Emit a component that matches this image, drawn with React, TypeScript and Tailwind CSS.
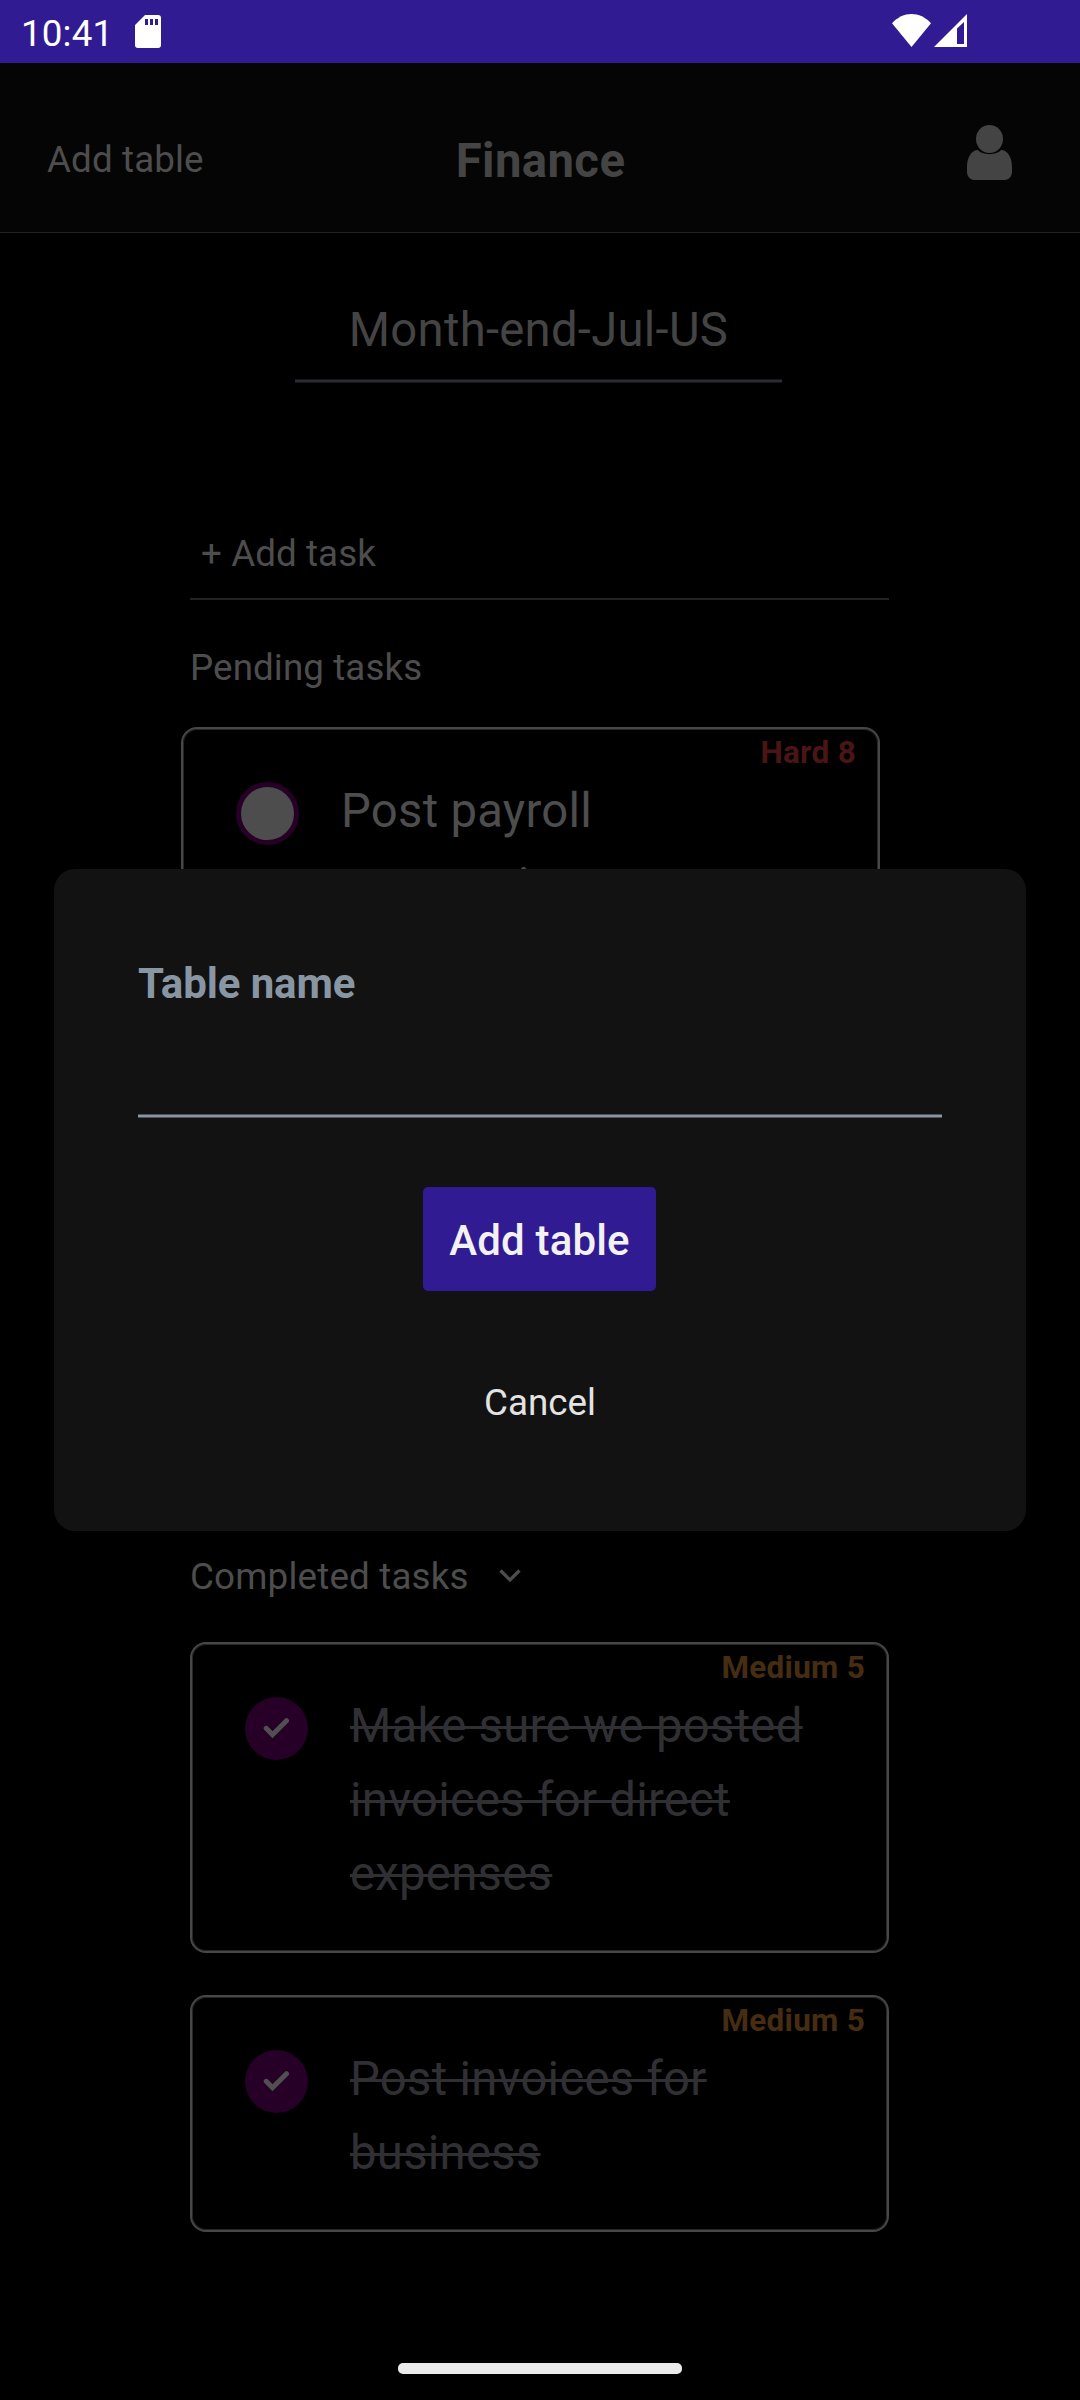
import type { ReactNode } from "react";

function StatusBar() {
  return (
    <div className="flex h-[63px] items-start bg-[#311b92] pl-[21px] text-white">
      <span className="mt-[12px] w-[92px] text-[36.75px] leading-[44px] tracking-[0.15px]">10:41</span>
      <svg className="mt-[15px] ml-[22px] h-[33px] w-[26px]" viewBox="0 0 26 33">
        <path
          fill="currentColor"
          fillRule="evenodd"
          d="M10 0H23Q26 0 26 3V30Q26 33 23 33H3Q0 33 0 30V10ZM10 4V10H13V4ZM15 4V10H18V4ZM20 4V10H23V4Z"
        />
      </svg>
      <div className="mt-[14px] mr-[113px] ml-auto flex gap-[3px]">
        <svg className="h-[33px] w-[39px]" viewBox="0 0 39 33">
          <path fill="currentColor" d="M0 9.3C11 -3.1 28 -3.1 39 9.3L19.5 33Z" />
        </svg>
        <svg className="h-[33px] w-[33px]" viewBox="0 0 33 33">
          <path fill="currentColor" fillRule="evenodd" d="M33 0V33H0ZM30 8L23 14.5V30H30Z" />
        </svg>
      </div>
    </div>
  );
}

function Header() {
  return (
    <header className="grid h-[170px] grid-cols-3 items-start border-b border-[#222222] bg-[#050505] pr-[68px] pl-[47px]">
      <span className="mt-[75px] text-[36.75px] leading-[44px] tracking-[0.12px] text-[#4d4d4d]">
        Add table
      </span>
      <h1 className="mt-[70px] pl-[22px] text-center text-[47.25px] leading-[56px] font-bold tracking-[0.4px] text-[#444444]">
        Finance
      </h1>
      <svg className="mt-[62px] h-[55px] w-[45px] justify-self-end" viewBox="0 0 45 55">
        <ellipse cx="22.5" cy="14" rx="13.5" ry="14" fill="#444444" />
        <path
          fill="#444444"
          d="M11 25C15 30.500 30 30.500 34 25C41 25 45 33 45 42V47C45 51 42 55 38 55H7C3 55 0 51 0 47V42C0 33 4 25 11 25Z"
        />
      </svg>
    </header>
  );
}

function Card({
  badge,
  badgeClass,
  done,
  children,
}: {
  badge: string;
  badgeClass: string;
  done?: boolean;
  children: ReactNode;
}) {
  return (
    <article className="relative flex w-[699px] items-start rounded-[16px] border-2 border-[#474747] pt-[45px] pb-[40px] pl-[53px] shadow-[inset_0_0_0_1px_#262626]">
      <span
        className={`absolute top-[6px] right-[22px] text-[31.5px] leading-[36px] font-bold tracking-[0.25px] ${badgeClass}`}
      >
        {badge}
      </span>
      {done ? (
        <span className="mt-[8px] flex size-[63px] shrink-0 items-center justify-center rounded-full bg-[#260026]">
          <svg className="h-[22px] w-[28px]" viewBox="0 0 28 22" fill="none" stroke="#505050" strokeWidth="5">
            <path d="M3.200 10.300L9.500 16.800L23.500 2.700" strokeLinecap="round" />
          </svg>
        </span>
      ) : (
        <span className="mt-[8px] size-[63px] shrink-0 rounded-full border-5 border-[#260026] bg-[#4d4d4d]" />
      )}
      <p
        className={
          done
            ? "ml-[42px] text-[47.25px] leading-[74px] tracking-[0.28px] text-[#303034] line-through decoration-[3px]"
            : "ml-[42px] text-[47.25px] leading-[74px] tracking-[0.28px] text-[#4d4d4d]"
        }
      >
        {children}
      </p>
    </article>
  );
}

function Dialog() {
  return (
    <div className="absolute inset-0 flex items-center justify-center">
      <section className="flex h-[662px] w-[972px] flex-col items-center rounded-[21px] bg-[#121212] px-[84px]">
        <label className="mt-[90px] self-stretch text-[42px] leading-[50px] font-bold tracking-[-0.1px] text-[#8896a3]">
          Table name
        </label>
        <div className="mt-[105px] h-[4px] w-[804px] border-y border-[#4b5259] bg-[#8896a3]" />
        <button className="mt-[69px] mr-px h-[104px] w-[233px] rounded-[5px] bg-[#311b92] pt-[3px] text-[42px] leading-[50px] font-medium tracking-[0.15px] text-[#f2f2f2]">
          Add table
        </button>
        <button className="mt-[90px] text-[36.75px] leading-[44px] text-[#e3e3e3]">Cancel</button>
      </section>
    </div>
  );
}

export default function App() {
  return (
    <div className="relative flex h-[2400px] w-[1080px] flex-col overflow-hidden bg-black font-['Roboto',sans-serif]">
      <StatusBar />
      <Header />
      <main className="flex flex-col pt-[69px]">
        <div className="ml-[295px] w-[487px] text-center text-[47.25px] leading-[56px] tracking-[0.27px] text-[#444444]">
          Month-end-Jul-US
          <div className="mt-[21px] h-[4px] border-y border-[#15181a] bg-[#272d31]" />
        </div>
        <div className="mt-[149px] ml-[190px] flex w-[699px] flex-col">
          <div className="h-[68px] border-b-2 border-[#222222] pl-[11px] text-[36.75px] leading-[44px] tracking-[0.08px] text-[#4d4d4d]">
            + Add task
          </div>
          <h2 className="mt-[46px] text-[36.75px] leading-[44px] tracking-[0.1px] text-[#4d4d4d]">
            Pending tasks
          </h2>
          <div className="mt-[37px] -ml-[9px] flex h-[828px] flex-col items-start">
            <Card badge="Hard 8" badgeClass="text-[#4a1515]">
              Post payroll
              <br />
              summaries
            </Card>
          </div>
          <div className="flex items-start">
            <h2 className="w-[278px] text-[36.75px] leading-[44px] tracking-[0.17px] whitespace-nowrap text-[#4d4d4d]">
              Completed tasks
            </h2>
            <svg className="mt-[14px] ml-[31px] h-[14px] w-[22px]" viewBox="0 0 22 14" fill="none">
              <path d="M1.500 1.500L11 11L20.500 1.500" stroke="#4d4d4d" strokeWidth="3.300" />
            </svg>
          </div>
          <div className="mt-[43px] flex flex-col gap-[42px]">
            <Card badge="Medium 5" badgeClass="text-[#462d12]" done>
              Make sure we posted
              <br />
              invoices for direct
              <br />
              expenses
            </Card>
            <Card badge="Medium 5" badgeClass="text-[#462d12]" done>
              Post invoices for
              <br />
              business
            </Card>
          </div>
        </div>
      </main>
      <Dialog />
      <div className="mx-auto mt-auto mb-[26px] h-[11px] w-[284px] rounded-[5px] bg-[#ebebeb]" />
    </div>
  );
}
